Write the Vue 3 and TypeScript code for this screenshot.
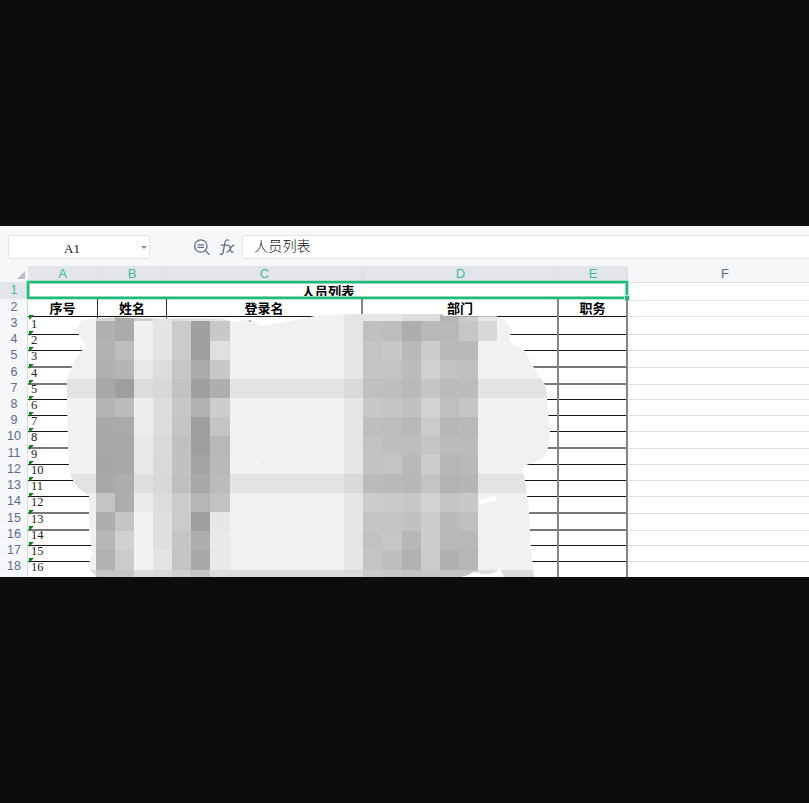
<script setup lang="ts">
interface Row {
  n: number
  height: number
  soft: boolean
}

const columns: string[] = ['A', 'B', 'C', 'D', 'E', 'F']

// y of the end of each data row, measured from the top of row 3
const rowEnds = [16, 32, 49, 65, 81, 97, 113, 130, 146, 162, 178, 195, 211, 227, 243, 259]
const softRows = [5, 6, 10, 14, 15]
const rows: Row[] = rowEnds.map((end, i) => ({
  n: i + 3,
  height: end - (i ? rowEnds[i - 1] : 0),
  soft: softRows.includes(i + 3),
}))

// Mosaic brightness by row: seven tiles on the left, then seven on the right
const mosaic: string[] = [
  'd5 aa cc e6 dd e0 e4|e6 e6 dd dd b5 cc e8',
  'b0 aa f0 e4 cb 9f c8|c0 bd ae b8 b8 c6 d8',
  'b2 bd f0 e4 cb 9f e0|c4 c8 b9 cd b9 ba f1',
  'b0 b4 e9 dd c6 aa c8|c4 c4 bc d0 c2 c0 f1',
  'a8 9e dd d8 c2 9f ae|bf be b9 c5 bb bc e3',
  'b3 bc ed dd c8 b2 cd|c8 c5 c1 d2 bf c5 f1',
  'a9 aa ec dc c5 9e c4|be bd b9 cb b7 b9 f1',
  'a8 a8 e8 da c0 9e b8|c2 be bd c5 bb bb f1',
  'a7 a8 e8 d9 c1 a4 b9|c3 c4 b9 cd b6 b9 f1',
  'a9 ad df d8 bf a8 bc|bb ba b7 c4 b3 b5 e3',
  'c4 ad ea dd cb b6 c2|cc ca c7 d3 c4 c8 f1',
  'ae c5 f2 df cb 9f e7|c4 c4 c1 cd ba bf f1',
  'b6 d1 f2 df c5 ae e9|c2 c6 b7 cc b8 b8 f1',
  'b2 cb f2 e4 c4 a9 e9|c4 be b2 cb b0 b6 f1',
  'c6 c6 dd d9 cf c5 dd|cb c8 c3 c7 c5 c4 dd',
]
const size = 19.08
const bands = [4, 9, 14]
const tiles = mosaic.flatMap((line, r) =>
  line.split('|').flatMap((half, side) =>
    half.split(' ').map((g, c) => ({
      x: (side ? 363.4 : 96) + c * size,
      y: 302.4 + r * size,
      fill: '#' + g + g + g,
    })),
  ),
)
</script>

<template>
  <main class="screen">
    <section class="sheet">
      <div class="toolbar">
        <div class="namebox">
          <span>A1</span>
          <i class="caret"></i>
        </div>
        <svg class="tools" width="44" height="20" viewBox="0 0 44 20">
          <g fill="none" stroke="#64708a" stroke-width="1.3" stroke-linecap="round">
            <circle cx="7.8" cy="8" r="6.2" />
            <path d="M5 6.8h5.6M5 9.3h5.6M12.3 12.6l3.7 3.7" />
            <path d="M35.5 2.2c-2-.8-3.1.3-3.5 2.1l-2 10.2c-.3 1.6-1.2 2.3-2.7 1.8M28.3 7.2h6" />
            <path d="M34.6 7.6c1.4-.5 2 .2 2.4 1.8l.8 3.2c.4 1.5 1 2 2.3 1.3M40.9 7.5c-1.6-.3-2.2.7-3.4 2.8-1.3 2.4-2 4-3.7 3.8" />
          </g>
        </svg>
        <div class="formula">人员列表</div>
      </div>

      <div class="grid heads">
        <div class="corner"><i></i></div>
        <div v-for="c in columns" :key="c" class="head" :class="{ on: c !== 'F' }">{{ c }}</div>
      </div>

      <div class="grid row first">
        <div class="num on">1</div>
        <div class="merged">人员列表</div>
        <div class="free"></div>
        <div class="selection"><i></i></div>
      </div>
      <div class="grid row second">
        <div class="num">2</div>
        <div class="cell title a">序号</div>
        <div class="cell title b">姓名</div>
        <div class="cell title c">登录名</div>
        <div class="cell title d">部门</div>
        <div class="cell title e">职务</div>
        <div class="free"></div>
      </div>
      <div
        v-for="r in rows"
        :key="r.n"
        class="grid row"
        :class="{ soft: r.soft }"
        :style="{ height: r.height + 'px' }"
      >
        <div class="num">{{ r.n }}</div>
        <div class="cell a value"><i class="flag"></i>{{ r.n - 2 }}</div>
        <div class="cell b"></div>
        <div class="cell c"></div>
        <div class="cell d"></div>
        <div class="cell e"></div>
        <div class="free"></div>
      </div>

      <svg class="cover" width="809" height="351" viewBox="0 226 809 351">
        <defs>
          <clipPath id="blob">
            <path
              d="M78 329Q78 320 86 319L115 317.5 153 318.5 222 318.5 230 321Q236 323 243 320L250 320Q256 321 257 324L261 326 285 322 320 315 365 314 440 314 447 316.5 496 316.5Q504 317 509 325 512 332 509 340L513 345 520 347Q528 352 530 362L541 378Q547 386 547 398L548 412 550 430Q550 446 545 456 537 462 523 466L524 476 529 508 530 535 532 559 534 577H504L500 568Q495 575 482 574L475 571 468 575 460 577H97L90 570Q88 563 92 554 92 547 89 530V496L82 491Q72 484 69 468L68 445 67 400V378L74 362Q79 352 86 347L85 344Q78 338 78 329Z"
            />
          </clipPath>
        </defs>
        <g clip-path="url(#blob)" shape-rendering="crispEdges">
          <rect x="60" y="310" width="500" height="270" fill="#f1f1f1" />
          <rect x="344.3" y="310" width="19.2" height="270" fill="#e5e5e5" />
          <g v-for="b in bands" :key="b">
            <rect x="60" :y="302.4 + b * size" width="500" :height="size" :fill="b === 14 ? '#dddddd' : '#e3e3e3'" />
            <rect x="344.3" :y="302.4 + b * size" width="19.2" :height="size" fill="#d9d9d9" />
          </g>
          <rect v-for="(t, i) in tiles" :key="i" :x="t.x" :y="t.y" :width="size" :height="size" :fill="t.fill" />
        </g>
        <path d="M479 499.5 485 499 488 497 496 496 497 501.5 486 502.5 481 504.5ZM256 461h1.2v3H256Z" fill="#fff" />
        <path d="M248 321l2-1 2 1.2-2 .8ZM474 572l3-.7-1 1.5Z" fill="#aaa" />
      </svg>
    </section>
  </main>
</template>

<style>
body {
  background: #0d0d0d;
}
</style>

<style scoped>
.screen {
  box-sizing: border-box;
  width: 809px;
  height: 803px;
  padding-top: 226px;
  background: #0d0d0d;
  overflow: hidden;
}
.sheet {
  position: relative;
  height: 351px;
  overflow: hidden;
  background: #fff;
  font-family: "Liberation Sans", "Noto Sans CJK SC", sans-serif;
}
.toolbar {
  display: flex;
  box-sizing: border-box;
  height: 40px;
  padding: 9px 0 7px 8px;
  background: #f5f7f9;
}
.namebox {
  display: flex;
  align-items: center;
  justify-content: center;
  position: relative;
  box-sizing: border-box;
  width: 142px;
  border: 1px solid #e2e4e9;
  border-radius: 2px;
  background: #fff;
  padding: 3px 14px 0 0;
  font: 13px "Liberation Serif", serif;
  color: #111;
}
.caret {
  position: absolute;
  right: 2px;
  top: 10px;
  border: 3px solid transparent;
  border-top-color: #8992a5;
  border-bottom: 0;
}
.tools {
  margin: 3px 5px 0 43px;
}
.formula {
  flex: 1;
  box-sizing: border-box;
  height: 24px;
  padding-left: 11px;
  border: 1px solid #e2e4e9;
  border-right: 0;
  border-radius: 2px 0 0 2px;
  background: #fff;
  font: 300 14.2px/19px "Noto Sans CJK SC", sans-serif;
  color: #111;
}
.grid {
  display: grid;
  grid-template-columns: 28px 70px 69px 196px 196px 69px 1fr;
}
.heads {
  height: 16px;
  background: #f5f7f9;
}
.corner {
  display: flex;
  justify-content: flex-end;
  align-items: flex-end;
  padding: 0 3px 4px 0;
}
.corner i {
  border-left: 8px solid transparent;
  border-bottom: 8px solid #b9bbc0;
}
.head {
  box-sizing: border-box;
  border-right: 1px solid #dcdfe8;
  border-bottom: 1px solid #dcdfe8;
  text-align: center;
  font-size: 13px;
  line-height: 16px;
  color: #5b6785;
}
.head:last-child {
  padding-right: 0;
  border-right: 0;
  padding-left: 13px;
}
.head.on {
  background: #e3e5ea;
  color: #3abf91;
}
.row {
  position: relative;
}
.first {
  height: 17px;
}
.second {
  height: 16px;
}
.num {
  box-sizing: border-box;
  border-right: 1px solid #d3dbe9;
  border-bottom: 1px solid #dce3ee;
  background: #f5f7f9;
  text-align: center;
  font-size: 12.5px;
  line-height: 17px;
  color: #5d6d8c;
  padding-left: 1px;
}
.num.on {
  background: #e3e5ea;
  color: #3abf91;
}
.merged {
  grid-column: 2 / 7;
  text-align: center;
  font: 700 13.2px/19px "Noto Sans CJK SC", sans-serif;
  color: #000;
}
.cell {
  position: relative;
  box-sizing: border-box;
  border-bottom: 1px solid #151515;
}
.soft .cell {
  border-bottom: 2px solid #777;
}
.a,
.b {
  border-right: 1px solid #333;
}
.c,
.d,
.e {
  border-right: 2px solid #858585;
}
.title {
  text-align: center;
  font: 700 13px/17px "Noto Sans CJK SC", sans-serif;
  color: #000;
}
.value {
  padding-left: 3px;
  font: 12.5px/19px "Liberation Serif", serif;
  color: #222;
}
.flag {
  position: absolute;
  left: 1px;
  top: 0;
  border-top: 5px solid #118018;
  border-right: 5px solid transparent;
}
.free {
  border-bottom: 1px solid #d9dfeb;
}
.selection {
  position: absolute;
  left: 27px;
  top: -1px;
  box-sizing: border-box;
  width: 601px;
  height: 18px;
  border: 2px solid #21ba7c;
  box-shadow: 0 0 0 0.6px #8bdcb9, inset 0 0 0 1px #8bdcb9;
}
.selection i {
  position: absolute;
  right: -3px;
  bottom: -3px;
  width: 4px;
  height: 4px;
  background: #21ba7c;
  box-shadow: 0 0 0 1px #b5e8d2;
}
.cover {
  position: absolute;
  left: 0;
  top: 0;
}
</style>
